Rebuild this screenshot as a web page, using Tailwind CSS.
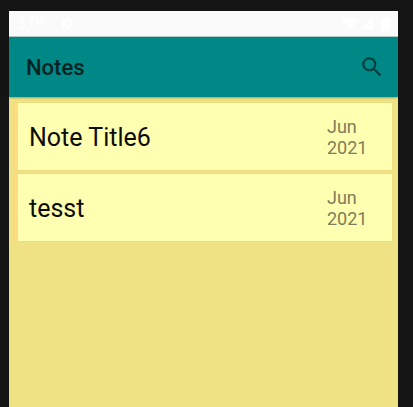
<!DOCTYPE html>
<html lang="en">
<head>
<meta charset="utf-8">
<meta name="viewport" content="width=device-width, initial-scale=1">
<title>Notes</title>
<script src="https://cdn.jsdelivr.net/npm/@tailwindcss/browser@4"></script>
</head>
<body class="flex min-h-screen bg-[#141414] pt-[11px] pr-[15px] pl-[9px] font-[Roboto,sans-serif]">
<div class="flex grow flex-col bg-[#efe285]">
  <div class="flex h-[26px] items-center border-b border-[#b5cfcd] bg-[#fafafa] pr-2 pl-2 text-white">
    <span class="text-base leading-6">3:08</span>
    <svg class="ml-3 size-[15px]" viewBox="0 0 24 24" fill="currentColor" aria-hidden="true"><path d="M19.14 12.94c.04-.3.06-.61.06-.94s-.02-.64-.07-.94l2.03-1.58a.49.49 0 0 0 .12-.61l-1.92-3.32a.49.49 0 0 0-.59-.22l-2.39.96c-.5-.38-1.03-.7-1.62-.94l-.36-2.54A.48.48 0 0 0 13.92 2.4h-3.84c-.24 0-.43.17-.47.41l-.36 2.54c-.59.24-1.13.57-1.62.94l-2.39-.96a.48.48 0 0 0-.59.22L2.74 8.87a.48.48 0 0 0 .12.61l2.03 1.58c-.05.3-.09.63-.09.94s.02.64.07.94l-2.03 1.58a.49.49 0 0 0-.12.61l1.92 3.32c.12.22.37.29.59.22l2.39-.96c.5.38 1.03.7 1.62.94l.36 2.54c.05.24.24.41.48.41h3.84c.24 0 .44-.17.47-.41l.36-2.54c.59-.24 1.13-.56 1.62-.94l2.39.96c.22.08.47 0 .59-.22l1.92-3.32a.47.47 0 0 0-.12-.61zM12 15.6A3.6 3.6 0 1 1 12 8.4a3.6 3.6 0 0 1 0 7.2z"/></svg>
    <svg class="ml-auto h-[13px] w-4" viewBox="0 0 16 13" fill="currentColor" aria-hidden="true"><path d="M8 13 0 3.500C4.500-.8 11.500-.8 16 3.500z"/></svg>
    <svg class="ml-[2px] size-[13px]" viewBox="0 0 13 13" aria-hidden="true"><path d="M0 13 13 0v13z" fill="currentColor"/><path d="M9.500 5H11v5H9.500z" fill="#fafafa"/></svg>
    <svg class="ml-2 h-[14px] w-[9px]" viewBox="0 0 9 14" fill="currentColor" aria-hidden="true"><path d="M3 0h3v1.500h3V14H0V1.500h3z"/></svg>
  </div>
  <header class="flex h-[60px] items-center justify-between bg-[#008886] pt-[2px] pr-[13px] pl-[17px] shadow-[0_1px_2px_rgba(0,0,0,0.3)]">
    <h1 class="text-[22px] leading-7 font-medium text-[#062322]">Notes</h1>
    <button type="button" aria-label="Search" class="pb-[2px] text-[#03403f]">
      <svg class="size-[26px]" viewBox="0 0 24 24" fill="currentColor" aria-hidden="true"><path d="M15.5 14h-.79l-.28-.27A6.47 6.47 0 0 0 16 9.500 6.500 6.500 0 1 0 9.500 16c1.610 0 3.090-.59 4.230-1.570l.27.28v.79l5 4.990L20.490 19zm-6 0a4.500 4.500 0 1 1 0-9 4.500 4.500 0 0 1 0 9z"/></svg>
    </button>
  </header>
  <main class="pt-[6px] pr-[6px] pl-[5px]">
    <ul class="flex flex-col gap-1">
      <li class="flex items-center justify-between border-l-4 border-[#ffdc82] bg-[#ffffb2] pt-[13px] pr-6 pb-3 pl-[11px] shadow-[0_0_1px_rgba(150,130,0,0.2)]">
        <h2 class="pt-[2px] text-[25px] leading-8 text-[#0c0c08]">Note Title6</h2>
        <p class="w-[41px] text-[18px] leading-[21px] text-[#7d7d58]">Jun 2021</p>
      </li>
      <li class="flex items-center justify-between border-l-4 border-[#ffdc82] bg-[#ffffb2] pt-[13px] pr-6 pb-3 pl-[11px] shadow-[0_0_1px_rgba(150,130,0,0.2)]">
        <h2 class="pt-[2px] text-[25px] leading-8 text-[#0c0c08]">tesst</h2>
        <p class="w-[41px] text-[18px] leading-[21px] text-[#7d7d58]">Jun 2021</p>
      </li>
    </ul>
  </main>
</div>
</body>
</html>
